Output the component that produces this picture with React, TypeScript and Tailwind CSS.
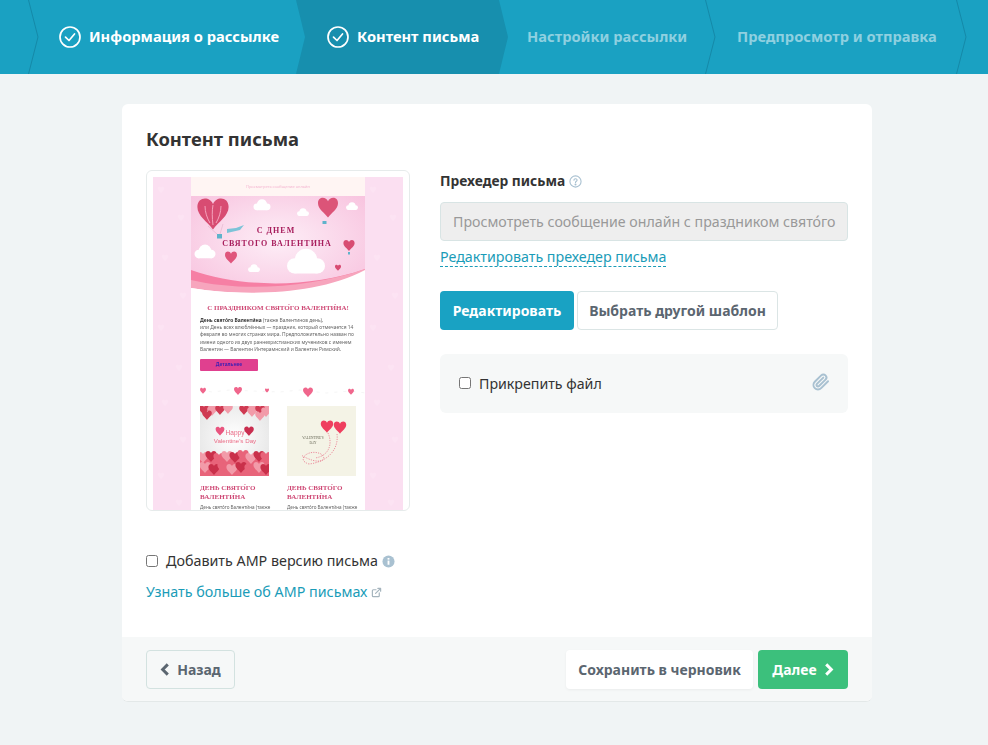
import React from "react";

const heart = "M0 -3C-1.5 -7 -8 -7 -8 -1.5C-8 3 -3 6 0 10C3 6 8 3 8 -1.5C8 -7 1.5 -7 0 -3Z";

function Heart({ x, y, s = 1, c = "#e9557f" }: { x: number; y: number; s?: number; c?: string }) {
  return <path d={heart} transform={`translate(${x} ${y}) scale(${s})`} fill={c} />;
}

function Cloud({ x, y, s = 1 }: { x: number; y: number; s?: number }) {
  return (
    <g transform={`translate(${x} ${y}) scale(${s})`} fill="#fff">
      <circle cx="-6" cy="1" r="4" />
      <circle cx="0" cy="-2" r="6" />
      <circle cx="6" cy="1" r="4" />
      <rect x="-8" y="0" width="16" height="5" rx="2.5" />
    </g>
  );
}

function Chevron() {
  return (
    <svg viewBox="0 0 12 74" className="w-3 h-[74px] shrink-0 overflow-visible" fill="none">
      <path d="M0.5 0L10 37L0.5 74" stroke="#1589a8" strokeWidth="1" />
    </svg>
  );
}

function CheckCircle() {
  return (
    <svg viewBox="0 0 22 22" className="w-[22px] h-[22px] shrink-0" fill="none" stroke="#fff" strokeWidth="1.7" strokeLinecap="round" strokeLinejoin="round">
      <circle cx="11" cy="11" r="10" />
      <path d="M6.5 11.2L10 14.5L15.5 8" />
    </svg>
  );
}

function Side() {
  const pts = [[8, 12], [28, 40], [12, 80], [30, 118], [8, 150], [26, 190], [12, 225], [30, 262], [8, 298], [26, 325]];
  return (
    <svg viewBox="0 0 38 333" className="w-[38px] h-[333px] shrink-0 block" aria-hidden="true">
      {pts.map(([x, y], i) => (
        <path key={i} d={heart} transform={`translate(${x} ${y}) scale(0.4)`} fill="#fce3f3" />
      ))}
    </svg>
  );
}

function Hero() {
  return (
    <svg viewBox="0 0 174 98" className="w-[174px] h-[98px] block">
      <defs>
        <radialGradient id="hg" cx="50%" cy="45%" r="70%">
          <stop offset="0%" stopColor="#fdeef7" />
          <stop offset="100%" stopColor="#f8c2de" />
        </radialGradient>
      </defs>
      <rect width="174" height="98" fill="url(#hg)" />
      <path d="M0 74C50 92 120 92 174 73V98H0Z" fill="#f67fa4" />
      <path d="M0 84C50 96 120 92 174 73V98H0Z" fill="#f7a5bd" />
      <path d="M0 92C50 100 125 100 174 74V98H0Z" fill="#fff" />
      <path d="M0 92C30 97 60 98 86 97C60 102 0 100 0 98Z" fill="#fff" />
      <path d="M17 30L26 38M32 28L29 38" stroke="#c98ba5" strokeWidth=".3" fill="none" />
      <Heart x={22} y={14} s={1.95} c="#d84c72" />
      <path d="M22 9C21 14 21 22 22 29M14 10C14 16 16 22 19 27M30 10C30 16 28 22 25 27" stroke="#f5a3bd" strokeWidth="1" fill="none" />
      <rect x="26" y="38" width="5" height="4.5" fill="#5fb3cb" />
      <path d="M36 37L49 34L53 29L45 32L36 33Z" fill="#7cc3d8" />
      <Heart x={137} y={9} s={1.25} c="#dc5478" />
      <rect x="131.5" y="25" width="4" height="3" fill="#5fb3cb" />
      <Heart x={158} y={48} s={0.7} c="#d84c72" />
      <rect x="157" y="56" width="2" height="2.5" fill="#5fb3cb" />
      <Heart x={40} y={60} s={0.75} c="#e0557c" />
      <Heart x={147} y={71} s={0.38} c="#d84c72" />
      <Cloud x={71} y={10} s={0.85} />
      <Cloud x={112} y={17} s={0.6} />
      <Cloud x={161} y={11} s={0.6} />
      <Cloud x={14} y={57} s={1.05} />
      <Cloud x={63} y={73} s={0.6} />
      <Cloud x={115} y={68} s={1.9} />
      <text x="85" y="37" textAnchor="middle" fontFamily="'Liberation Serif', serif" fontWeight="700" fontSize="8" letterSpacing="1" fill="#a71d5c">С ДНЕМ</text>
      <text x="86" y="50" textAnchor="middle" fontFamily="'Liberation Serif', serif" fontWeight="700" fontSize="8" letterSpacing="1" fill="#a71d5c">СВЯТОГО ВАЛЕНТИНА</text>
    </svg>
  );
}

function Garland() {
  return (
    <svg viewBox="0 0 166 14" className="w-[166px] h-[14px] block" aria-hidden="true">
      <path d="M0 5L12 7L30 5L52 6L80 7L100 5L126 8L150 6L166 8" stroke="#eee" strokeWidth=".6" strokeDasharray="3 6" fill="none" />
      <Heart x={3} y={5} s={0.37} c="#f0668c" />
      <Heart x={38} y={5} s={0.5} c="#f0668c" />
      <Heart x={67} y={5} s={0.25} c="#f0668c" />
      <Heart x={108} y={6} s={0.62} c="#f0668c" />
      <Heart x={151} y={6} s={0.37} c="#f0668c" />
    </svg>
  );
}

function CardOne() {
  return (
    <svg viewBox="0 0 69 70" className="w-[69px] h-[70px] block">
      <defs>
        <radialGradient id="c1" cx="50%" cy="45%" r="60%">
          <stop offset="0%" stopColor="#ffffff" />
          <stop offset="100%" stopColor="#e6e6e6" />
        </radialGradient>
      </defs>
      <rect width="69" height="70" fill="url(#c1)" />
      <rect x="0" y="0" width="28" height="3" fill="#f29ba9" />
      <rect x="43" y="0" width="26" height="3" fill="#f29ba9" />
      <rect x="0" y="52" width="69" height="18" fill="#e8647a" />
      {[[4, 3], [12, 4], [20, 3], [28, 2], [44, 3], [52, 5], [60, 3], [66, 5], [7, 8], [60, 9]].map(([x, y], i) => (
        <Heart key={i} x={x} y={y} s={0.6} c={i % 2 ? "#f29ba9" : "#cf3a52"} />
      ))}
      {[[3, 50], [11, 49], [19, 51], [27, 49], [35, 50], [43, 48], [51, 51], [59, 49], [66, 50], [5, 60], [14, 62], [23, 60], [32, 62], [41, 60], [50, 62], [59, 60], [66, 62]].map(([x, y], i) => (
        <Heart key={i} x={x} y={y} s={0.7} c={i % 3 === 0 ? "#f29ba9" : i % 3 === 1 ? "#c9304a" : "#e8647a"} />
      ))}
      <Heart x={20} y={24} s={0.55} c="#e9557f" />
      <Heart x={49} y={24} s={0.6} c="#c92e50" />
      <text x="35" y="29" textAnchor="middle" fontFamily="'Liberation Sans', sans-serif" fontSize="6.5" fill="#ea6a85">Happy</text>
      <text x="35" y="37" textAnchor="middle" fontFamily="'Liberation Sans', sans-serif" fontSize="6.2" fill="#ea6a85">Valentine's Day</text>
    </svg>
  );
}

function CardTwo() {
  return (
    <svg viewBox="0 0 69 70" className="w-[69px] h-[70px] block">
      <rect width="69" height="70" fill="#f4f3e6" />
      <Heart x={40} y={19} s={0.78} c="#ef3e5e" />
      <Heart x={53} y={20} s={0.78} c="#ef3e5e" />
      <path d="M50 28C52 44 40 56 22 58C8 54 22 42 34 48C42 54 32 60 14 49M41 27C46 38 42 50 28 52" stroke="#e8758a" strokeWidth=".8" strokeDasharray="1.2 1.2" fill="none" />
      <text x="26" y="33" textAnchor="middle" fontFamily="'Liberation Serif', serif" fontSize="3.4" fill="#665">VALENTINE'S</text>
      <text x="26" y="38" textAnchor="middle" fontFamily="'Liberation Serif', serif" fontSize="3.4" fill="#665">DAY</text>
    </svg>
  );
}

function Preview() {
  const serif = "font-['Liberation_Serif',serif]";
  return (
    <div className="w-[264px] h-[341px] shrink-0 rounded-md border border-[#e6ebeb] p-[6px] pb-0 bg-white">
      <div className="h-[333px] overflow-hidden flex justify-center bg-[#fbdff1] blur-[0.3px]">
        <Side />
        <div className="w-[174px] shrink-0 bg-white">
          <div className="h-[19px] bg-[#fff5f3] flex items-center justify-center text-[4px] text-[#f4b5d0]">Просмотреть сообщение онлайн</div>
          <Hero />
          <div className="px-[9px] text-[#666]">
            <div className={`${serif} mt-[10px] text-center text-[7px] font-bold leading-[9px] text-[#cf4a76] whitespace-nowrap`}>С ПРАЗДНИКОМ СВЯТО́ГО ВАЛЕНТИ́НА!</div>
            <p className="mt-[3.5px] text-[4.9px] leading-[7.4px] whitespace-nowrap">
              <b className="text-[#333]">День свято́го Валенти́на</b> (также Валентинов день),<br />
              или День всех влюблённых — праздник, который отмечается 14<br />
              февраля во многих странах мира. Предположительно назван по<br />
              имени одного из двух раннехристианских мучеников с именем<br />
              Валентин — Валентин Интерамнский и Валентин Римский.
            </p>
            <div className="mt-[5px] w-[58px] h-[12px] rounded-[1px] bg-[#e0408f] flex items-center justify-center text-[4.8px] font-bold text-[#3d1fb3]">Детальнее</div>
            <div className="mt-[14px]"><Garland /></div>
            <div className="mt-[7px] flex justify-between">
              {[<CardOne key="a" />, <CardTwo key="b" />].map((card, i) => (
                <div key={i} className="w-[69px]">
                  {card}
                  <div className={`${serif} mt-[8px] text-[7px] font-bold leading-[9px] text-[#cf4a76]`}>ДЕНЬ СВЯТО́ГО<br />ВАЛЕНТИ́НА</div>
                  <div className="mt-[2px] text-[4.6px] leading-[7px] whitespace-nowrap text-[#666]">День свято́го Валенти́на (также</div>
                </div>
              ))}
            </div>
          </div>
        </div>
        <Side />
      </div>
    </div>
  );
}

export default function App() {
  return (
    <div className="min-h-screen bg-[#f0f4f5] font-['Noto_Sans',sans-serif] text-[#333]">
      {/* Stepper */}
      <div className="h-[74px] bg-[#1aa1c2] flex text-[14.7px] font-bold leading-none">
        <div className="w-[28px] shrink-0" />
        <div className="w-[268px] shrink-0 flex items-center relative">
          <div className="absolute left-0 top-0"><Chevron /></div>
          <div className="ml-[31px] flex items-center gap-2 text-white whitespace-nowrap"><CheckCircle /><span className="-translate-y-px">Информация о рассылке</span></div>
        </div>
        <div className="w-[203px] shrink-0 flex items-center relative">
          <div className="absolute inset-y-0 left-0 w-[212px] bg-[#178fae] [clip-path:polygon(0_0,203px_0,212px_50%,203px_100%,0_100%,9px_50%)]" />
          <div className="relative ml-[31px] flex items-center gap-2 text-white whitespace-nowrap"><CheckCircle /><span className="-translate-y-px">Контент письма</span></div>
        </div>
        <div className="w-[206px] shrink-0 flex items-center relative">
          <div className="absolute left-[206px] top-0"><Chevron /></div>
          <span className="ml-[28px] -translate-y-px text-[#8fd0e0] whitespace-nowrap">Настройки рассылки</span>
        </div>
        <div className="w-[251px] shrink-0 flex items-center relative">
          <div className="absolute left-[251px] top-0"><Chevron /></div>
          <span className="ml-[32px] -translate-y-px text-[#8fd0e0] whitespace-nowrap">Предпросмотр и отправка</span>
        </div>
      </div>

      {/* Card */}
      <div className="w-[750px] ml-[122px] mt-[30px] bg-white rounded-md border-b border-[#e3e8e8] overflow-hidden">
        <div className="px-6 pt-[22px] h-[533px]">
          <h1 className="text-[18.4px] font-bold leading-[26px] text-[#333]">Контент письма</h1>
          <div className="mt-[18px] flex gap-[30px]">
            <Preview />
            <div className="w-[408px]">
              <div className="flex items-center gap-[4px] h-[22px] text-[13.8px] font-bold text-[#333]">
                Прехедер письма
                <svg viewBox="0 0 14 14" className="w-[13px] h-[13px]" fill="none" stroke="#a9c1d1" strokeWidth="1.2" strokeLinecap="round">
                  <circle cx="7" cy="7" r="6" />
                  <path d="M5.3 5.5C5.4 3.4 8.8 3.6 8.7 5.6C8.6 6.8 7 6.8 7 8.2" />
                  <circle cx="7" cy="10.2" r=".5" fill="#a9c1d1" />
                </svg>
              </div>
              <div className="mt-[10px] h-[39px] rounded border border-[#d8e4e4] bg-[#eeeeee] flex items-center px-3 text-[14.2px] text-[#999] whitespace-nowrap overflow-hidden">
                Просмотреть сообщение онлайн с праздником свято́го
              </div>
              <div className="mt-[3px] h-[20px]">
                <span className="inline-block text-[14.25px] leading-[19px] text-[#1a9cb8] border-b border-dashed border-[#1a9cb8]">Редактировать прехедер письма</span>
              </div>
              <div className="mt-[27px] flex gap-[3px] text-[14px] font-bold">
                <button className="w-[134px] h-[39px] rounded bg-[#19a2c3] text-white">Редактировать</button>
                <button className="w-[201px] h-[39px] rounded border border-[#dbe5e5] bg-white text-[#5b6670]">Выбрать другой шаблон</button>
              </div>
              <div className="mt-[24px] h-[59px] rounded-md bg-[#f6f8f8] flex items-center justify-between pl-[19px] pr-[18px]">
                <label className="flex items-center gap-2 text-[14.2px] text-[#333]">
                  <input type="checkbox" className="w-[12px] h-[12px]" />
                  Прикрепить файл
                </label>
                <svg viewBox="0 0 24 24" className="w-[18px] h-[18px] -translate-y-[2px]" fill="none" stroke="#a9c1d1" strokeWidth="2.6" strokeLinecap="round" strokeLinejoin="round">
                  <path d="M21.4 11.05l-9.19 9.19a6 6 0 0 1-8.49-8.49l8.57-8.57A4 4 0 1 1 18 8.84l-8.59 8.57a2 2 0 0 1-2.83-2.83l8.49-8.48" />
                </svg>
              </div>
            </div>
          </div>
          <label className="mt-[40px] flex items-center gap-2 h-[20px] text-[14.3px] text-[#333]">
            <input type="checkbox" className="w-[12px] h-[12px]" />
            <span>Добавить AMP версию письма</span>
            <svg viewBox="0 0 14 14" className="w-[13px] h-[13px] -ml-[4px]">
              <circle cx="7" cy="7" r="6.5" fill="#a9c1d1" />
              <rect x="6" y="6" width="2" height="4.5" fill="#fff" />
              <rect x="6" y="3.2" width="2" height="1.8" fill="#fff" />
            </svg>
          </label>
          <div className="mt-[11px] flex items-center gap-1 h-[20px] text-[14.3px] text-[#1a9cb8]">
            Узнать больше об AMP письмах
            <svg viewBox="0 0 24 24" className="w-[11px] h-[11px]" fill="none" stroke="#a5b4bd" strokeWidth="2.6" strokeLinecap="round" strokeLinejoin="round">
              <path d="M18 13v6a2 2 0 0 1-2 2H5a2 2 0 0 1-2-2V8a2 2 0 0 1 2-2h6M15 3h6v6M10 14L21 3" />
            </svg>
          </div>
        </div>
        {/* Footer */}
        <div className="h-[64px] bg-[#f6f8f8] px-6 flex items-center justify-between text-[14px] font-bold">
          <button className="w-[89px] h-[39px] rounded border border-[#d3e2e0] text-[#5b6670] flex items-center justify-center gap-[7px]">
            <svg viewBox="0 0 10 14" className="w-[10px] h-[13px]" fill="none" stroke="#5b6670" strokeWidth="3.2"><path d="M8 1.5L2.5 7L8 12.5" /></svg>
            Назад
          </button>
          <div className="flex gap-[5px]">
            <button className="w-[187px] h-[39px] rounded bg-white text-[#5b6670] shadow-[0_1px_3px_rgba(0,0,0,0.05)]">Сохранить в черновик</button>
            <button className="w-[90px] h-[39px] rounded bg-[#3cc07c] text-white flex items-center justify-center gap-[7px]">
              Далее
              <svg viewBox="0 0 10 14" className="w-[10px] h-[13px]" fill="none" stroke="#fff" strokeWidth="3.2"><path d="M2 1.5L7.5 7L2 12.5" /></svg>
            </button>
          </div>
        </div>
      </div>
    </div>
  );
}
